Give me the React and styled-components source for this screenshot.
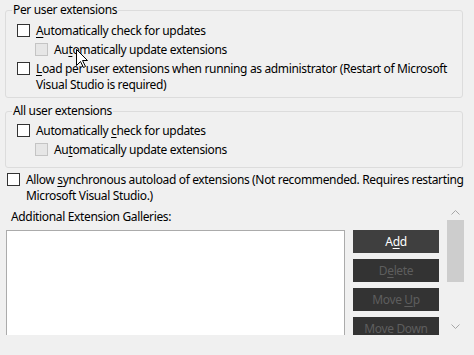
import React from "react";
import styled, { createGlobalStyle } from "styled-components";

const Global = createGlobalStyle`
  html, body { margin: 0; padding: 0; background: #f0f0f0; }
  body {
    font-family: "Noto Sans", "DejaVu Sans", sans-serif;
    font-size: 12px;
    letter-spacing: -0.35px;
    color: #000;
  }
`;

const Page = styled.div`
  position: relative;
  width: 474px;
  height: 355px;
  overflow: hidden;
  background: #f0f0f0;
  display: flex;
  flex-direction: column;
`;

const Upper = styled.div`
  height: 335px;
  display: flex;
  flex-direction: column;
  overflow: hidden;
`;

const Group = styled.fieldset`
  margin: ${(p) => p.$top}px 11px 0 5px;
  padding: 0 0 ${(p) => p.$bottom}px 6px;
  border: 1px solid #dcdcdc;
  border-radius: 3px;
  min-width: 0;
`;

const Legend = styled.legend`
  padding: 0 1px;
  line-height: 16px;
`;

const Rows = styled.div`
  display: flex;
  flex-direction: column;
  gap: 3px;
  padding: ${(p) => p.$top || 4}px 0 0 5px;
`;

const Row = styled.label`
  display: flex;
  align-items: flex-start;
  gap: 6px;
  margin-left: ${(p) => p.$indent || 0}px;
  line-height: 16px;
  white-space: nowrap;
  color: #000;
`;

const Box = styled.span`
  flex: none;
  box-sizing: border-box;
  width: 13px;
  height: 13px;
  margin-top: 1px;
  border: 1px solid ${(p) => (p.$disabled ? "#c4c4c4" : "#333333")};
  background: ${(p) => (p.$disabled ? "#e6e6e6" : "#ffffff")};
`;

const Key = styled.span`
  text-decoration: underline;
  text-underline-offset: 2px;
`;

const StandaloneRow = styled(Row)`
  margin: 4px 0 0 7px;
`;

const Lower = styled.div`
  flex: 1;
  min-height: 0;
  display: flex;
  gap: 8px;
  padding-right: 10px;
  overflow: hidden;
`;

const Galleries = styled.div`
  flex: 1;
  display: flex;
  flex-direction: column;
  padding: 5px 0 0 6px;
`;

const GalleryLabel = styled.div`
  padding-left: 5px;
  line-height: 16px;
  margin-bottom: 5px;
`;

const ListRow = styled.div`
  display: flex;
  gap: 8px;
`;

const ListBox = styled.div`
  box-sizing: border-box;
  width: 339px;
  height: 130px;
  border: 1px solid #ababab;
  background: #ffffff;
`;

const ButtonCol = styled.div`
  display: flex;
  flex-direction: column;
  gap: 6px;
  width: 86px;
`;

const Button = styled.button`
  box-sizing: border-box;
  height: 23px;
  padding: 0;
  border: none;
  font: inherit;
  letter-spacing: inherit;
  line-height: 23px;
  text-align: center;
  background: ${(p) => (p.disabled ? "#333333" : "#3f3f3f")};
  color: ${(p) => (p.disabled ? "#5e5e5e" : "#ffffff")};
`;

const Scrollbar = styled.div`
  width: 17px;
  display: flex;
  flex-direction: column;
`;

const ArrowCell = styled.div`
  height: ${(p) => p.$h}px;
  display: flex;
  align-items: center;
  justify-content: center;
`;

const Thumb = styled.div`
  height: 62px;
  background: #cdcdcd;
`;

const Track = styled.div`
  flex: 1;
`;

const Footer = styled.div`
  height: 20px;
  background: #f0f0f0;
`;

const Cursor = styled.svg`
  position: absolute;
  left: 76px;
  top: 49px;
  pointer-events: none;
`;

const Chevron = ({ up }) => (
  <svg width="9" height="5" viewBox="0 0 9 5">
    <polyline
      points={up ? "0.5,4.5 4.5,0.5 8.5,4.5" : "0.5,0.5 4.5,4.5 8.5,0.5"}
      fill="none"
      stroke="#a6a6a6"
      strokeWidth="1"
    />
  </svg>
);

export default function App() {
  return (
    <Page>
      <Global />
      <Upper>
        <Group $top={2} $bottom={4}>
          <Legend>Per user extensions</Legend>
          <Rows $top={5}>
            <Row>
              <Box />
              <span>
                <Key>A</Key>utomatically check for updates
              </span>
            </Row>
            <Row $indent={18}>
              <Box $disabled />
              <span>
                Au<Key>t</Key>omatically update extensions
              </span>
            </Row>
            <Row>
              <Box />
              <span>
                <Key>L</Key>oad per user extensions when running as administrator (Restart of Microsoft
                <br />
                Visual Studio is required)
              </span>
            </Row>
          </Rows>
        </Group>
        <Group $top={5} $bottom={9}>
          <Legend>All user extensions</Legend>
          <Rows $top={4}>
            <Row>
              <Box />
              <span>
                Automatically <Key>c</Key>heck for updates
              </span>
            </Row>
            <Row $indent={18}>
              <Box $disabled />
              <span>
                Au<Key>t</Key>omatically update extensions
              </span>
            </Row>
          </Rows>
        </Group>
        <StandaloneRow>
          <Box />
          <span>
            Allow <Key>s</Key>ynchronous autoload of extensions (Not recommended. Requires restarting
            <br />
            Microsoft Visual Studio.)
          </span>
        </StandaloneRow>
        <Lower>
          <Galleries>
            <GalleryLabel>Additional Extension Galleries:</GalleryLabel>
            <ListRow>
              <ListBox />
              <ButtonCol>
                <Button>
                  A<Key>d</Key>d
                </Button>
                <Button disabled>
                  D<Key>e</Key>lete
                </Button>
                <Button disabled>
                  Move <Key>U</Key>p
                </Button>
                <Button disabled>
                  Move D<Key>o</Key>wn
                </Button>
              </ButtonCol>
            </ListRow>
          </Galleries>
          <Scrollbar>
            <ArrowCell $h={16}>
              <Chevron up />
            </ArrowCell>
            <Thumb />
            <Track />
            <ArrowCell $h={17}>
              <Chevron />
            </ArrowCell>
          </Scrollbar>
        </Lower>
      </Upper>
      <Footer />
      <Cursor width="13" height="20" viewBox="0 0 13 20">
        <path
          d="M0.5,0.5 L0.5,16.5 L4.5,12.5 L7.5,18.5 L9.5,17.5 L6.5,11.5 L11.5,11.5 Z"
          fill="#ffffff"
          stroke="#000000"
          strokeWidth="1"
        />
      </Cursor>
    </Page>
  );
}
